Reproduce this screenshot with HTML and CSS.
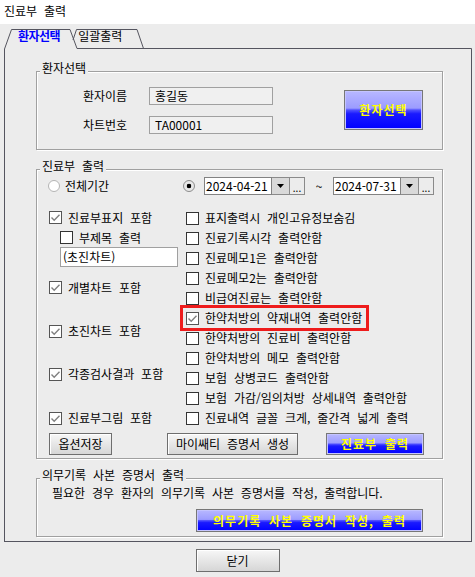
FILE: index.html
```html
<!DOCTYPE html>
<html lang="ko">
<head>
  <meta charset="UTF-8">
  <title>진료부 출력</title>
  <link rel="stylesheet" href="styles.css">
</head>
<body>
  <div class="window">
    <div class="titlebar">진료부 출력</div>

    <div class="tabs">
      <svg class="tab-lines" width="475" height="25" viewBox="0 0 475 25">
        <path d="M73 16 L76.5 5.5 L137 5.5 L143.5 24.5" fill="none" stroke="#55555f"/>
        <path d="M4.5 25 L11.5 5.5 L70 5.5 L77 24.5 L471.5 24.5 L471.5 25" fill="none" stroke="#55555f"/>
      </svg>
      <span class="tab active">환자선택</span>
      <span class="tab">일괄출력</span>
    </div>

    <div class="panel">
      <!-- 환자선택 -->
      <div class="group">
        <div class="group-title">환자선택</div>
        <div class="patient">
          <div class="patient-fields">
            <div class="field-row">
              <span class="field-label">환자이름</span>
              <span class="field">홍길동</span>
            </div>
            <div class="field-row">
              <span class="field-label">차트번호</span>
              <span class="field">TA00001</span>
            </div>
          </div>
          <button class="btn btn-blue select-btn">환자선택</button>
        </div>
      </div>

      <!-- 진료부 출력 -->
      <div class="group chart-group">
        <div class="group-title">진료부 출력</div>
        <div class="period-row">
          <div class="period-all">
            <span class="radio"></span>전체기간
          </div>
          <div class="period-range">
            <span class="radio on"></span>
            <span class="date">
              <span class="date-text">2024-04-21</span>
              <span class="drop"><svg width="7" height="4" viewBox="0 0 7 4"><path d="M0 0h7L3.5 4z"/></svg></span>
              <span class="dots">...</span>
            </span>
            <span class="tilde">~</span>
            <span class="date">
              <span class="date-text">2024-07-31</span>
              <span class="drop"><svg width="7" height="4" viewBox="0 0 7 4"><path d="M0 0h7L3.5 4z"/></svg></span>
              <span class="dots">...</span>
            </span>
          </div>
        </div>

        <div class="options">
          <div class="opt-col left-col">
            <div class="opt"><span class="cb on"><svg width="11" height="11" viewBox="0 0 11 11"><path d="M1.5 5.5L4.2 8.2L9.5 2.8" fill="none" stroke="#808080" stroke-width="1.4"/></svg></span>진료부표지 포함</div>
            <div class="opt sub"><span class="cb"></span>부제목 출력</div>
            <div class="subtitle-box">(초진차트)</div>
            <div class="opt gap-a"><span class="cb on"><svg width="11" height="11" viewBox="0 0 11 11"><path d="M1.5 5.5L4.2 8.2L9.5 2.8" fill="none" stroke="#808080" stroke-width="1.4"/></svg></span>개별차트 포함</div>
            <div class="opt gap-b"><span class="cb on"><svg width="11" height="11" viewBox="0 0 11 11"><path d="M1.5 5.5L4.2 8.2L9.5 2.8" fill="none" stroke="#808080" stroke-width="1.4"/></svg></span>초진차트 포함</div>
            <div class="opt gap-c"><span class="cb on"><svg width="11" height="11" viewBox="0 0 11 11"><path d="M1.5 5.5L4.2 8.2L9.5 2.8" fill="none" stroke="#808080" stroke-width="1.4"/></svg></span>각종검사결과 포함</div>
            <div class="opt gap-b"><span class="cb on"><svg width="11" height="11" viewBox="0 0 11 11"><path d="M1.5 5.5L4.2 8.2L9.5 2.8" fill="none" stroke="#808080" stroke-width="1.4"/></svg></span>진료부그림 포함</div>
          </div>
          <div class="opt-col right-col">
            <div class="opt"><span class="cb"></span>표지출력시 개인고유정보숨김</div>
            <div class="opt"><span class="cb"></span>진료기록시각 출력안함</div>
            <div class="opt"><span class="cb"></span>진료메모1은 출력안함</div>
            <div class="opt"><span class="cb"></span>진료메모2는 출력안함</div>
            <div class="opt"><span class="cb"></span>비급여진료는 출력안함</div>
            <div class="opt hl"><span class="cb on"><svg width="11" height="11" viewBox="0 0 11 11"><path d="M1.5 5.5L4.2 8.2L9.5 2.8" fill="none" stroke="#808080" stroke-width="1.4"/></svg></span>한약처방의 약재내역 출력안함</div>
            <div class="opt"><span class="cb"></span>한약처방의 진료비 출력안함</div>
            <div class="opt"><span class="cb"></span>한약처방의 메모 출력안함</div>
            <div class="opt"><span class="cb"></span>보험 상병코드 출력안함</div>
            <div class="opt"><span class="cb"></span>보험 가감/임의처방 상세내역 출력안함</div>
            <div class="opt"><span class="cb"></span>진료내역 글꼴 크게, 줄간격 넓게 출력</div>
          </div>
        </div>

        <div class="btn-row">
          <button class="btn save-btn">옵션저장</button>
          <button class="btn cert-btn">마이쌔티 증명서 생성</button>
          <button class="btn btn-blue print-btn">진료부 출력</button>
        </div>
      </div>

      <!-- 의무기록 사본 증명서 출력 -->
      <div class="group copy-group">
        <div class="group-title">의무기록 사본 증명서 출력</div>
        <div class="copy-text">필요한 경우 환자의 의무기록 사본 증명서를 작성, 출력합니다.</div>
        <button class="btn btn-blue copy-btn">의무기록 사본 증명서 작성, 출력</button>
      </div>
    </div>

    <div class="footer">
      <button class="btn close-btn">닫기</button>
    </div>
  </div>
</body>
</html>
```

FILE: styles.css
```css
* {
  box-sizing: border-box;
}

body {
  margin: 0;
  background: #ececec;
  font-family: "Noto Sans CJK KR", "Noto Sans", sans-serif;
  font-size: 12px;
  line-height: 14px;
  color: #000;
  word-spacing: 3.5px;
}

.window {
  width: 475px;
  height: 577px;
}

.titlebar {
  height: 24px;
  background: #fff;
  padding: 4px 0 0 4px;
}

/* tabs */
.tabs {
  position: relative;
  height: 25px;
  display: flex;
  padding-left: 18px;
}

.tab-lines {
  position: absolute;
  left: 0;
  top: 0;
}

.tab {
  position: relative;
  margin-top: 5px;
}

.tab.active {
  color: #0000ff;
  font-weight: bold;
  letter-spacing: -0.5px;
}

.tab + .tab {
  margin-left: 18px;
}

.panel {
  margin-left: 4px;
  width: 468px;
  height: 493px;
  border: 1px solid #55555f;
  border-top: none;
  padding: 22px 0 0 31px;
}

/* group boxes */
.group {
  width: 407px;
  display: flex;
  flex-direction: column;
  border: 1px solid #a0a0a0;
  box-shadow: inset 1px 1px 0 #fff, 1px 1px 0 #fff;
}

.group-title {
  align-self: flex-start;
  margin: -11px 0 0 3px;
  padding: 0 2px;
  background: #ececec;
}

.chart-group,
.copy-group {
  margin-top: 19px;
}

/* patient */
.patient {
  display: flex;
  align-items: flex-start;
  padding: 12px 0 15px 46px;
}

.patient-fields {
  display: flex;
  flex-direction: column;
  gap: 11px;
}

.field-row {
  display: flex;
  align-items: center;
}

.field-label {
  width: 66px;
}

.field {
  width: 124px;
  height: 18px;
  border: 1px solid #a0a0a0;
  background: #f0f0f0;
  padding-left: 5px;
  line-height: 16px;
}

/* buttons */
.btn {
  font: inherit;
  word-spacing: 3.5px;
  line-height: 14px;
  padding: 0;
  color: #000;
  border: 1px solid #6e6e6e;
  background: linear-gradient(#f7f7f7, #d6d6d6);
  box-shadow: inset 1px 1px 0 #fff;
}

.btn-blue {
  color: #ffff00;
  font-weight: bold;
  letter-spacing: 1px;
  border: 1px solid #777;
  background: linear-gradient(to bottom, #b8b8ff 0%, #9c9cff 45%, #5050ff 50%, #1a1aff 60%, #0000ff 100%);
  box-shadow: inset 0 0 0 1px #c4c4ff;
}

.select-btn {
  width: 79px;
  height: 40px;
  margin: 3px 19px 0 auto;
}

/* period */
.period-row {
  display: flex;
  align-items: center;
  height: 18px;
  margin-top: 4px;
}

.period-all {
  width: 146px;
  padding-left: 11px;
  display: flex;
  align-items: center;
}

.period-range {
  display: flex;
  align-items: center;
}

.radio {
  width: 12px;
  height: 12px;
  border-radius: 50%;
  border: 1px solid #b4b4b4;
  background: #fff;
  margin-right: 5px;
  flex: none;
}

.radio.on {
  border-color: #8c8c8c;
  background: radial-gradient(circle, #000 0 2px, #e8e8e8 2.6px);
  margin-right: 9px;
}

.date {
  display: flex;
  height: 18px;
}

.date-text {
  width: 68px;
  border: 1px solid #828282;
  background: #fff;
  padding-left: 1px;
  line-height: 16px;
}

.drop {
  width: 18px;
  border: 1px solid #8a8a8a;
  border-left: none;
  background: #d9d9d9;
  display: flex;
  align-items: center;
  justify-content: center;
}

.dots {
  width: 15px;
  border: 1px solid #8a8a8a;
  border-left: none;
  background: #ececec;
  text-align: center;
  line-height: 20px;
  font-size: 10px;
}

.tilde {
  width: 28px;
  text-align: center;
}

/* options */
.options {
  display: flex;
  height: 220px;
  margin-top: 13px;
}

.opt-col {
  display: flex;
  flex-direction: column;
}

.left-col {
  width: 146px;
  padding-left: 12px;
}

.right-col {
  padding-left: 3px;
}

.opt {
  display: flex;
  align-items: center;
  height: 20px;
  white-space: nowrap;
}

.opt.sub {
  padding-left: 11px;
}

.gap-a {
  margin-top: 11px;
}

.gap-b {
  margin-top: 24px;
}

.gap-c {
  margin-top: 23px;
}

.cb {
  width: 13px;
  height: 13px;
  border: 1px solid #333;
  background: #fff;
  margin-right: 6px;
  flex: none;
  display: flex;
  align-items: center;
  justify-content: center;
}

.cb.on {
  border-color: #555;
}

.subtitle-box {
  margin: -1px 0 0 11px;
  width: 118px;
  height: 20px;
  border: 1px solid #a0a0a0;
  background: #fff;
  padding-left: 2px;
  line-height: 17px;
}

.opt.hl {
  align-self: flex-start;
  margin-left: -3px;
  padding: 0 4px 0 3px;
  outline: 3px solid #ee1c1c;
}

.btn-row {
  display: flex;
  padding: 0 0 3px 12px;
  margin-top: 5px;
}

.btn-row .btn {
  height: 22px;
}

.save-btn {
  width: 63px;
}

.cert-btn {
  width: 131px;
  margin-left: 55px;
}

.print-btn {
  width: 98px;
  margin-left: 28px;
}

/* copy certificate */
.copy-text {
  margin-top: 4px;
  padding-left: 15px;
}

.copy-btn {
  align-self: flex-end;
  width: 227px;
  height: 23px;
  margin: 9px 19px 4px 0;
}

.footer {
  display: flex;
  justify-content: center;
  padding-top: 7px;
}

.close-btn {
  width: 84px;
  height: 23px;
}
```
